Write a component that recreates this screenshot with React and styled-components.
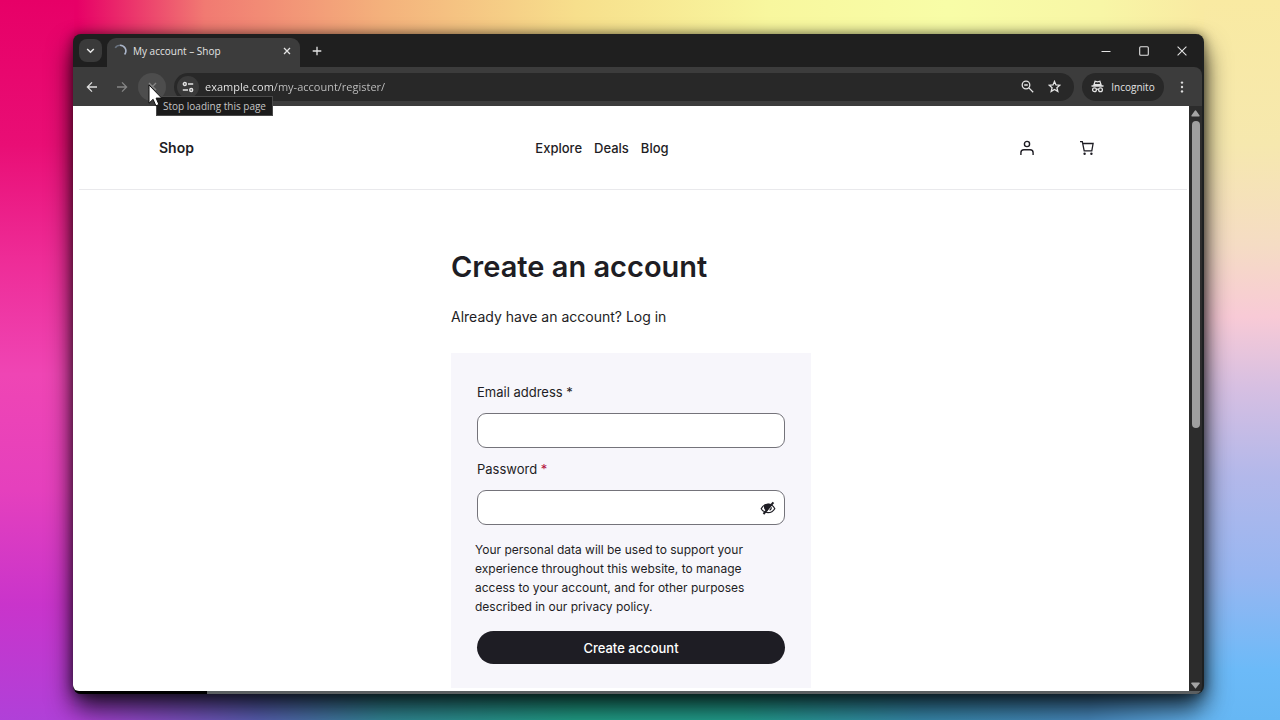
import React from "react";
import styled, { createGlobalStyle, css } from "styled-components";

const uiFont = '"Open Sans", "Noto Sans", sans-serif';
const shopFont = 'Inter, "Liberation Sans", sans-serif';

const GlobalStyle = createGlobalStyle`
  *, *::before, *::after { box-sizing: border-box; }
  body { margin: 0; font-family: ${shopFont}; color: #1e1d24; }
  h1, p { margin: 0; }
  a { color: inherit; text-decoration: none; }
  button { font: inherit; color: inherit; border: 0; padding: 0; background: none; cursor: pointer; }
  svg { display: block; flex: none; }
`;

const Desktop = styled.div`
  height: 100vh;
  overflow: hidden;
  display: flex;
  padding: 34px 76px 26px 73px;
  background:
    linear-gradient(180deg, #e70067 0%, #e90e75 20%, #ee2c97 36%, #ef45b4 52%, #e540bd 68%, #c934cb 84%, #b040d8 100%) left / 74px 100% no-repeat,
    linear-gradient(180deg, #f9eaa2 0%, #f6e8ae 20%, #f5dcc4 34%, #f8cad6 44%, #d6bfe2 54%, #b3b8ea 66%, #97b6f1 80%, #6cbaf8 93%, #66b7f4 100%) right / 76px 100% no-repeat,
    linear-gradient(90deg, #e70067 0%, #e70067 6%, #f17a72 16%, #f4b27c 30%, #f7df8c 45%, #f8f79e 60%, #f8fda7 74%, #f8f6a6 86%, #f9eaa2 94%) top / 100% 50% no-repeat,
    linear-gradient(90deg, #b040d8 0%, #b040d8 6%, #5c62b8 20%, #348d9c 30%, #22a58c 45%, #24a594 58%, #3a8fb4 72%, #4a8ec4 85%, #66b7f4 94%) bottom / 100% 50% no-repeat;
`;

const BrowserWindow = styled.div`
  flex: 1;
  min-width: 0;
  display: flex;
  flex-direction: column;
  overflow: hidden;
  border-radius: 8px;
  border-right: 2px solid #1d2021;
  background: #1f1f1f;
  box-shadow: 0 0 12px rgba(0, 0, 0, 0.5), 0 14px 26px rgba(0, 0, 0, 0.8);
`;

const TitleBar = styled.div`
  height: 33px;
  flex: none;
  display: flex;
  align-items: center;
  padding: 0 1px 0 6px;
  color: #e3e3e3;
  font: 10px/16px ${uiFont};
`;

const TabSearch = styled.button`
  display: grid;
  place-items: center;
  width: 23px;
  height: 23px;
  margin-right: 5px;
  border-radius: 8px;
  background: #3a3a3a;
`;

const Tab = styled.div`
  align-self: flex-end;
  display: flex;
  align-items: center;
  gap: 6px;
  width: 193px;
  height: 29px;
  padding: 0 6px 4px 6px;
  border-radius: 9px 9px 0 0;
  background: #3c3c3c;
`;

const TabTitle = styled.span`
  flex: 1;
  white-space: nowrap;
`;

const TabButton = styled.button`
  display: grid;
  place-items: center;
  width: ${(p) => p.$size}px;
  height: ${(p) => p.$size}px;
`;

const NewTab = styled(TabButton)`
  margin-left: 6px;
`;

const WindowControls = styled.div`
  display: flex;
  margin-left: auto;
`;

const WindowButton = styled.button`
  display: grid;
  place-items: center;
  width: 38px;
  height: 33px;
`;

const Toolbar = styled.div`
  position: relative;
  z-index: 1;
  flex: none;
  display: flex;
  align-items: center;
  height: 39px;
  padding: 0 6px 0 5px;
  border-radius: 0 8px 0 0;
  background: #3c3c3c;
  color: #e3e3e3;
`;

const NavButtons = styled.div`
  display: flex;
  gap: 2px;
  margin-right: 8px;
`;

const RoundButton = styled.button`
  position: relative;
  display: grid;
  place-items: center;
  width: 28px;
  height: 28px;
  border-radius: 50%;
  color: ${(p) => (p.$dim ? "#858585" : "#dedede")};
  background: ${(p) => (p.$active ? "#4d4d4d" : "transparent")};
`;

const Tooltip = styled.span`
  position: absolute;
  top: 23px;
  left: 18px;
  padding: 0 6px;
  border: 1px solid #4a4a4a;
  background: #1b1b1b;
  color: #c4c4c4;
  font: 10px/18px ${uiFont};
  white-space: nowrap;
`;

const Pointer = styled.svg`
  position: absolute;
  top: 11px;
  left: 10px;
`;

const AddressBar = styled.div`
  flex: 1;
  min-width: 0;
  display: flex;
  align-items: center;
  height: 28px;
  padding: 0 6px 0 3px;
  border-radius: 14px;
  background: #282828;
`;

const SiteInfo = styled.button`
  display: grid;
  place-items: center;
  width: 22px;
  height: 22px;
  margin-right: 6px;
  border-radius: 50%;
  background: #3a3a3a;
`;

const Address = styled.input`
  flex: 1;
  min-width: 0;
  height: 22px;
  padding: 0;
  border: 0;
  outline: 0;
  font: 11px/22px ${uiFont};
  color: #d0d0d0;
  background: linear-gradient(90deg, #f0f0f0 68px, #c4c4c4 68px);
  -webkit-background-clip: text;
  background-clip: text;
  -webkit-text-fill-color: transparent;
`;

const IncognitoChip = styled.button`
  display: flex;
  align-items: center;
  justify-content: center;
  gap: 7px;
  width: 82px;
  height: 28px;
  margin: 0 4px 0 8px;
  border-radius: 14px;
  background: #282828;
  font: 10px/16px ${uiFont};
`;

const Viewport = styled.div`
  flex: 1;
  min-height: 0;
  display: flex;
`;

const Page = styled.div`
  flex: 1;
  min-width: 0;
  overflow: hidden;
  background: #fff;
  border-bottom-left-radius: 6px;
`;

const ScrollTrack = styled.div`
  display: flex;
  flex-direction: column;
  align-items: center;
  width: 13px;
  padding: 4px 0 2px;
  background: #2c2c2c;
`;

const ScrollThumb = styled.div`
  width: 8px;
  height: 53%;
  margin: 4px 0 auto;
  border-radius: 4px;
  background: #9f9f9f;
`;

const LoadStrip = styled.div`
  flex: none;
  height: 3px;
  background: linear-gradient(90deg, #000 134px, #5b5f61 134px);
`;

const SiteHeader = styled.header`
  display: flex;
  align-items: center;
  justify-content: space-between;
  height: 84px;
  margin: 0 2px 0 6px;
  padding: 0 83px 0 80px;
  border-bottom: 1px solid #e9e9ec;
`;

const Brand = styled.a`
  font-size: 14px;
  font-weight: 600;
  line-height: 20px;
`;

const SiteNav = styled.nav`
  display: flex;
  gap: 12px;
  font-size: 13px;
  font-weight: 500;
  line-height: 20px;
`;

const HeaderActions = styled.div`
  display: flex;
  gap: 26px;
`;

const HeaderButton = styled.button`
  display: grid;
  place-items: center;
  width: 34px;
  height: 34px;
`;

const Main = styled.main`
  width: 360px;
  max-width: 100%;
  margin: 0 auto;
  padding-top: 57px;
`;

const Heading = styled.h1`
  font-size: 29px;
  font-weight: 600;
  line-height: 40px;
`;

const Intro = styled.p`
  margin: 20px 0 26px;
  font-size: 14px;
  line-height: 20px;
`;

const Card = styled.form`
  padding: 29px 24px 24px;
  background: #f7f6fb;
`;

const Field = styled.div`
  display: flex;
  flex-direction: column;
  gap: 11px;
  margin-bottom: 11px;
  padding: 0 2px;
`;

const Label = styled.label`
  font-size: 13px;
  line-height: 20px;
`;

const Required = styled.span`
  color: ${(p) => (p.$alert ? "#b3123c" : "inherit")};
`;

const inputBox = css`
  width: 100%;
  height: 35px;
  padding: 0 12px;
  border: 1px solid #74737a;
  border-radius: 9px;
  background: #fff;
  font: 13px/20px ${shopFont};
  outline: 0;
`;

const TextInput = styled.input`
  ${inputBox}
`;

const PasswordBox = styled.div`
  position: relative;
`;

const PasswordInput = styled.input`
  ${inputBox}
  padding-right: 32px;
`;

const RevealButton = styled.button`
  position: absolute;
  top: 10px;
  right: 9px;
`;

const Policy = styled.p`
  margin: 15px 0;
  padding-right: 20px;
  font-size: 12px;
  line-height: 19px;
`;

const SubmitRow = styled.div`
  padding: 0 2px;
`;

const Submit = styled.button`
  width: 100%;
  height: 33px;
  border-radius: 17px;
  background: #1e1d24;
  color: #fff;
  font-size: 13px;
  font-weight: 500;
`;

const Line = ({ size = 16, box = 16, width = 1.4, children }) => (
  <svg width={size} height={size} viewBox={`0 0 ${box} ${box}`} fill="none" stroke="currentColor" strokeWidth={width} aria-hidden="true">
    {children}
  </svg>
);

const Arrow = ({ up }) => (
  <svg width="9" height="7" viewBox="0 0 9 7" fill="#a5a5a5" aria-hidden="true">
    <path d={up ? "M4.5 0.3 Q5 0.3 5.4 1 L8.6 5.6 Q8.9 6.6 8 6.6 H1 Q.1 6.6 .4 5.6 L3.6 1 Q4 .3 4.5 .3Z" : "M4.5 6.7 L.3 1.4 Q0 .4 1 .4 H8 Q9 .4 8.7 1.4Z"} />
  </svg>
);

export default function App() {
  return (
    <>
      <GlobalStyle />
      <Desktop>
        <BrowserWindow>
          <TitleBar>
            <TabSearch aria-label="Search tabs">
              <Line size={9} box={9} width={1.6}><path d="M1.2 3 4.5 6.2 7.8 3" /></Line>
            </TabSearch>
            <Tab>
              <Line size={14} box={14} width={1.6}>
                <path stroke="#a9b4c8" d="M7 1.2 A5.8 5.8 0 0 1 11.6 10.6" />
                <path stroke="#6b7482" d="M7 1.2 A5.8 5.8 0 0 0 2.2 3.8" />
              </Line>
              <TabTitle>My account – Shop</TabTitle>
              <TabButton $size={14} aria-label="Close tab">
                <Line size={8} box={8} width={1.3}><path d="m1 1 6 6M7 1 1 7" /></Line>
              </TabButton>
            </Tab>
            <NewTab $size={22} aria-label="New tab">
              <Line size={10} box={10} width={1.3}><path d="M5 .7v8.6M.7 5h8.6" /></Line>
            </NewTab>
            <WindowControls>
              <WindowButton aria-label="Minimize">
                <Line size={10} box={10} width={1}><path d="M.5 5.5h9" /></Line>
              </WindowButton>
              <WindowButton aria-label="Maximize">
                <Line size={10} box={10} width={1.1}><rect x=".7" y=".7" width="8.6" height="8.6" rx="1" /></Line>
              </WindowButton>
              <WindowButton aria-label="Close window">
                <Line size={10} box={10} width={1.1}><path d="m.6.6 8.8 8.8M9.4.6.6 9.4" /></Line>
              </WindowButton>
            </WindowControls>
          </TitleBar>

          <Toolbar>
            <NavButtons>
              <RoundButton aria-label="Back">
                <Line size={12} box={12} width={1.3}><path d="M11 6H1.6M6 1.4 1.4 6 6 10.6" /></Line>
              </RoundButton>
              <RoundButton $dim aria-label="Forward">
                <Line size={12} box={12} width={1.3}><path d="M1 6h9.4M6 1.4 10.6 6 6 10.6" /></Line>
              </RoundButton>
              <RoundButton $active $dim aria-label="Stop">
                <Line size={9} box={9}><path d="m1 1 7 7M8 1 1 8" /></Line>
                <Tooltip role="tooltip">Stop loading this page</Tooltip>
                <Pointer width="15" height="24" viewBox="0 0 15 24" aria-hidden="true">
                  <path d="M1 1v18.2l4.1-3.900 2.800 6.500 3-1.300-2.800-6.400h5.600z" fill="#fff" stroke="#111" strokeWidth="1" />
                </Pointer>
              </RoundButton>
            </NavButtons>
            <AddressBar>
              <SiteInfo aria-label="View site information">
                <Line size={12} box={12} width={1.4}>
                  <circle cx="2.8" cy="3" r="1.5" /><path d="M6 3h5.2M.8 9H6" /><circle cx="9.2" cy="9" r="1.5" />
                </Line>
              </SiteInfo>
              <Address type="text" aria-label="Address" defaultValue="example.com/my-account/register/" />
              <TabButton $size={27} aria-label="Zoom">
                <Line size={13} box={13} width={1.3}><circle cx="5" cy="5" r="3.8" /><path d="m7.900 7.900 4.300 4.300M3.200 5h3.600" /></Line>
              </TabButton>
              <TabButton $size={27} aria-label="Bookmark this tab">
                <Line size={13} box={13} width={1.3}><path d="m6.5 1.4 1.5 3.5 3.8.3-2.9 2.5.9 3.7-3.3-2-3.3 2 .9-3.7L1.2 5.2 5 4.9z" /></Line>
              </TabButton>
            </AddressBar>
            <IncognitoChip>
              <Line size={13} box={13} width={1.3}>
                <path d="M3 4.7 4.1 1.2 6.5 1.8 8.9 1.2 10 4.7zM.5 6h12M5.4 9.5q1.1-.7 2.2 0" />
                <circle cx="3.5" cy="9.7" r="1.9" /><circle cx="9.5" cy="9.7" r="1.9" />
              </Line>
              Incognito
            </IncognitoChip>
            <RoundButton aria-label="Menu">
              <svg width="4" height="12" viewBox="0 0 4 12" fill="currentColor" aria-hidden="true">
                <circle cx="2" cy="1.6" r="1.2" /><circle cx="2" cy="6" r="1.2" /><circle cx="2" cy="10.4" r="1.2" />
              </svg>
            </RoundButton>
          </Toolbar>

          <Viewport>
            <Page>
              <SiteHeader>
                <Brand href="#shop">Shop</Brand>
                <SiteNav>
                  <a href="#explore">Explore</a>
                  <a href="#deals">Deals</a>
                  <a href="#blog">Blog</a>
                </SiteNav>
                <HeaderActions>
                  <HeaderButton aria-label="My account">
                    <Line size={16} box={16} width={1.4}>
                      <circle cx="8" cy="4" r="2.6" /><path d="M1.9 15v-2.2a3 3 0 0 1 3-3h6.2a3 3 0 0 1 3 3V15" />
                    </Line>
                  </HeaderButton>
                  <HeaderButton aria-label="Cart">
                    <Line size={16} box={16} width={1.3}>
                      <path d="M1 1.7h2.3l1.9 9.100h7.600l1.300-7.300H3.700" />
                      <circle cx="5.6" cy="13.8" r="1.2" fill="currentColor" stroke="none" />
                      <circle cx="12.4" cy="13.8" r="1.2" fill="currentColor" stroke="none" />
                    </Line>
                  </HeaderButton>
                </HeaderActions>
              </SiteHeader>

              <Main>
                <Heading>Create an account</Heading>
                <Intro>Already have an account? <a href="#login">Log in</a></Intro>
                <Card onSubmit={(e) => e.preventDefault()}>
                  <Field>
                    <Label htmlFor="email">Email address <Required>*</Required></Label>
                    <TextInput id="email" type="email" />
                  </Field>
                  <Field>
                    <Label htmlFor="password">Password <Required $alert>*</Required></Label>
                    <PasswordBox>
                      <PasswordInput id="password" type="password" />
                      <RevealButton type="button" aria-label="Show password">
                        <Line size={16} box={16} width={1.2}>
                          <path d="M1.2 8.7Q3.6 4.2 8 4.2t6.8 4.5Q12.4 12.6 8 12.6T1.2 8.7Z" />
                          <path d="M4.6 5.7q-.5 3.6 2.3 4.8L10 4.6q-3-1-5.4 1.1z" fill="currentColor" />
                          <path d="M3.500 14 13.400 2.400" strokeWidth="2" />
                          <path d="M9.6 10.2q1.7-.8 1.7-3" />
                        </Line>
                      </RevealButton>
                    </PasswordBox>
                  </Field>
                  <Policy>
                    Your personal data will be used to support your experience throughout this website, to manage access to your account, and for other purposes described in our <a href="#privacy">privacy policy</a>.
                  </Policy>
                  <SubmitRow>
                    <Submit type="submit">Create account</Submit>
                  </SubmitRow>
                </Card>
              </Main>
            </Page>
            <ScrollTrack>
              <Arrow up />
              <ScrollThumb />
              <Arrow />
            </ScrollTrack>
          </Viewport>
          <LoadStrip />
        </BrowserWindow>
      </Desktop>
    </>
  );
}
